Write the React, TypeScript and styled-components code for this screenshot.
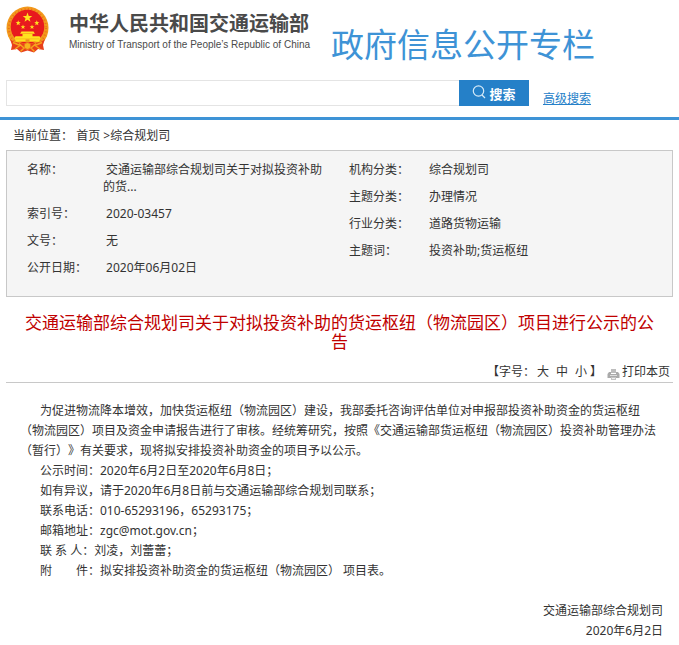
import React from 'react';
import styled, { createGlobalStyle } from 'styled-components';

const GlobalStyle = createGlobalStyle`
  * { box-sizing: border-box; }
  body {
    margin: 0;
    background: #fff;
    color: #333;
    font: 12px/20px "Noto Sans", "Noto Sans CJK SC", sans-serif;
    text-spacing-trim: space-all;
  }
  a { color: inherit; text-decoration: none; }
`;

const Header = styled.header`
  border-bottom: 3px solid #3e93d6;
  padding: 6px 6px 11px;
`;

const Brand = styled.div`
  display: flex;
  align-items: flex-start;
  height: 74px;
`;

const EmblemSvg = styled.svg`
  flex: none;
  width: 43px;
  height: 48px;
  margin-right: 20px;
`;

const Ministry = styled.div`
  flex: none;
  width: 262px;
  padding-top: 4px;
  color: #4a4a4a;
  white-space: nowrap;
`;

const MinistryName = styled.div`
  font: 700 20px/26px "Noto Sans CJK SC", sans-serif;
`;

const MinistryEnglish = styled.div`
  font: 10px/18px "Liberation Sans", Arial, sans-serif;
`;

const SiteTitle = styled.h1`
  margin: 14px 0 0;
  color: #3e93d6;
  font: 400 33px/46px "Noto Sans CJK SC", sans-serif;
  white-space: nowrap;
`;

const SearchForm = styled.form`
  display: flex;
  align-items: stretch;
  height: 26px;
`;

const SearchInput = styled.input`
  width: 453px;
  min-width: 0;
  border: 1px solid #e4e4e4;
  border-right: 0;
  padding: 0 6px;
  font: inherit;
  outline: none;
`;

const SearchButton = styled.button`
  display: flex;
  align-items: center;
  justify-content: center;
  gap: 3px;
  width: 70px;
  border: 0;
  padding: 2px 0 0;
  background: #2580c8;
  color: #fff;
  font: 700 13px/20px "Noto Sans CJK SC", sans-serif;
  svg { margin-bottom: 4px; }
`;

const AdvancedLink = styled.a`
  align-self: flex-end;
  margin: 0 0 -3px 14px;
  color: #2580c8;
  text-decoration: underline;
`;

const Main = styled.main`
  padding: 0 6px;
`;

const Breadcrumb = styled.nav`
  padding: 6px 7px 4px;
  white-space: pre-wrap;
`;

const InfoPanel = styled.section`
  display: grid;
  grid-template-columns: 322px 1fr;
  border: 1px solid #c8c8c8;
  padding: 10px 20px 18px;
  min-height: 147px;
  background: #f5f5f5;
`;

const InfoList = styled.dl<{ $label: number }>`
  display: grid;
  grid-template-columns: ${p => p.$label}px 1fr;
  align-content: start;
  row-gap: 10px;
  margin: 0;
  padding-right: 20px;
  line-height: 17px;
  dt, dd { margin: 0; }
`;

const Title = styled.h2`
  margin: 15px 0 0;
  padding: 0 16px;
  color: #c00000;
  font: 400 17px/19px "Noto Sans CJK SC", sans-serif;
  text-align: center;
`;

const Tools = styled.div`
  display: flex;
  justify-content: flex-end;
  align-items: center;
  border-bottom: 1px solid #c8c8c8;
  padding: 12px 3px 0 0;
`;

const SizeOptions = styled.div`
  display: flex;
  gap: 7px;
  margin: 0 3px 0 2px;
`;

const PlainButton = styled.button`
  border: 0;
  padding: 0;
  background: none;
  color: inherit;
  font: inherit;
`;

const PrintButton = styled(PlainButton)`
  display: flex;
  align-items: center;
  gap: 2px;
  margin-left: 5px;
  svg { margin-top: 4px; }
`;

const Article = styled.article`
  padding: 18px 14px 0;
  p { margin: 0; text-indent: 20px; white-space: pre-wrap; }
`;

const Signature = styled.footer`
  padding: 20px 10px 0;
  text-align: right;
`;

const star = (cx: number, cy: number, r: number) =>
  Array.from({ length: 10 }, (_, i) => {
    const a = (Math.PI / 5) * i - Math.PI / 2;
    const k = i % 2 ? r * 0.42 : r;
    return `${(cx + k * Math.cos(a)).toFixed(2)},${(cy + k * Math.sin(a)).toFixed(2)}`;
  }).join(' ');

const Emblem = () => (
  <EmblemSvg viewBox="0 0 43 48" role="img" aria-label="国徽">
    <ellipse cx="21.5" cy="22" rx="21" ry="21.5" fill="#f29a1c" />
    <ellipse cx="21.5" cy="22" rx="18.6" ry="19" fill="none" stroke="#ec6f1b" strokeWidth="2" strokeDasharray="1 2.4" />
    <path d="M4 33 L8 36 L21.5 38 L35 36 L39 33 L37 39 L38 44 L32 43 L28 46.5 L21.5 44.5 L15 46.5 L11 43 L5 44 L6 39Z" fill="#e8401b" />
    <ellipse cx="21.5" cy="20.8" rx="16.8" ry="17" fill="#e81a1e" />
    <g fill="#ffe11f">
      <polygon points={star(21.5, 11.6, 5)} />
      <polygon points={star(12.2, 17, 2.7)} />
      <polygon points={star(30.8, 17, 2.7)} />
      <polygon points={star(17, 21, 2.5)} />
      <polygon points={star(26, 21, 2.5)} />
      <path d="M15.5 25.6h12l1.4 2.2h-14.8zM16.5 28h10v2.2h-10zM9.5 30.2h24l1.2 2.4H8.3zM8.8 32.4h25.4l-1.2 3.4H10z" />
    </g>
    <path d="M9.5 32.9h24M19.8 33.6h3.4v2.2h-3.4z" fill="#f0901c" stroke="#f3a01c" strokeWidth=".6" />
    <circle cx="21.5" cy="40" r="3.4" fill="#f6b51e" stroke="#ee6a1b" strokeWidth="1" />
    <path d="M7 36.5 L14 39.5 L9 43M36 36.5 L29 39.5 L34 43M13 37.5 L18 42 L14.5 45.5M30 37.5 L25 42 L28.5 45.5" fill="none" stroke="#f6a41d" strokeWidth="1.4" />
  </EmblemSvg>
);

const SearchIcon = () => (
  <svg width="14" height="14" viewBox="0 0 14 14" fill="none" stroke="#d6eaf8" strokeWidth="1.2" aria-hidden="true">
    <circle cx="6.5" cy="6" r="5.2" />
    <path d="M10 10l3 3" />
  </svg>
);

const PrintIcon = () => (
  <svg width="13" height="11" viewBox="0 0 13 11" aria-hidden="true">
    <path d="M4 0h5v4H4z" fill="#bdbdbd" />
    <path d="M2 3h2v2h5V3h2l1.5 2v4H.5V5z" fill="#aaa" />
    <path d="M3 6.5h7" stroke="#ddd" />
    <path d="M4 8h5v3H4z" fill="#c4c4c4" />
    <path d="M5 9.5h3" stroke="#eee" />
  </svg>
);

const leftInfo = [
  ['名称：', '交通运输部综合规划司关于对拟投资补助的货...'],
  ['索引号：', '2020-03457'],
  ['文号：', '无'],
  ['公开日期：', '2020年06月02日'],
];

const rightInfo = [
  ['机构分类：', '综合规划司'],
  ['主题分类：', '办理情况'],
  ['行业分类：', '道路货物运输'],
  ['主题词：', '投资补助;货运枢纽'],
];

const paragraphs = [
  '为促进物流降本增效，加快货运枢纽（物流园区）建设，我部委托咨询评估单位对申报部投资补助资金的货运枢纽（物流园区）项目及资金申请报告进行了审核。经统筹研究，按照《交通运输部货运枢纽（物流园区）投资补助管理办法（暂行）》有关要求，现将拟安排投资补助资金的项目予以公示。',
  '公示时间：2020年6月2日至2020年6月8日；',
  '如有异议，请于2020年6月8日前与交通运输部综合规划司联系；',
  '联系电话：010-65293196，65293175；',
  '邮箱地址：zgc@mot.gov.cn；',
  '联 系 人：刘凌，刘蕾蕾；',
  '附　　件：拟安排投资补助资金的货运枢纽（物流园区） 项目表。',
];

const Info = ({ rows, label }: { rows: string[][]; label: number }) => (
  <InfoList $label={label}>
    {rows.map(([name, value]) => (
      <React.Fragment key={name}>
        <dt>{name}</dt>
        <dd>{'\u00a0' + value}</dd>
      </React.Fragment>
    ))}
  </InfoList>
);

export default function App() {
  return (
    <>
      <GlobalStyle />
      <Header>
        <Brand>
          <Emblem />
          <Ministry>
            <MinistryName>中华人民共和国交通运输部</MinistryName>
            <MinistryEnglish>Ministry of Transport of the People’s Republic of China</MinistryEnglish>
          </Ministry>
          <SiteTitle>政府信息公开专栏</SiteTitle>
        </Brand>
        <SearchForm onSubmit={e => e.preventDefault()}>
          <SearchInput type="text" aria-label="搜索" />
          <SearchButton type="submit"><SearchIcon />搜索</SearchButton>
          <AdvancedLink href="#advanced">高级搜索</AdvancedLink>
        </SearchForm>
      </Header>
      <Main>
        <Breadcrumb>当前位置： <a href="#home">首页</a> &gt;<a href="#dept">综合规划司</a></Breadcrumb>
        <InfoPanel>
          <Info rows={leftInfo} label={76} />
          <Info rows={rightInfo} label={77} />
        </InfoPanel>
        <Title>交通运输部综合规划司关于对拟投资补助的货运枢纽（物流园区）项目进行公示的公告</Title>
        <Tools>
          <span>【字号：</span>
          <SizeOptions>
            <PlainButton type="button">大</PlainButton>
            <PlainButton type="button">中</PlainButton>
            <PlainButton type="button">小</PlainButton>
          </SizeOptions>
          <span>】</span>
          <PrintButton type="button"><PrintIcon />打印本页</PrintButton>
        </Tools>
        <Article>
          {paragraphs.map(text => <p key={text}>{text}</p>)}
        </Article>
        <Signature>
          <div>交通运输部综合规划司</div>
          <div>2020年6月2日</div>
        </Signature>
      </Main>
    </>
  );
}
